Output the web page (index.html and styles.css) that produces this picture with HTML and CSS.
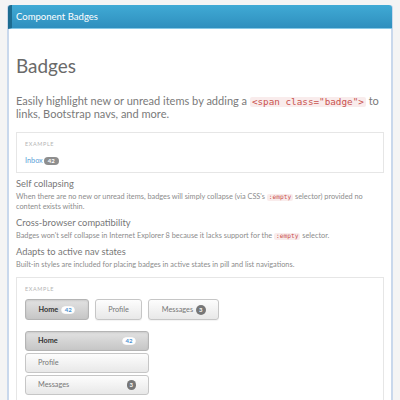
FILE: index.html
```html
<!DOCTYPE html>
<html>
<head>
<meta charset="utf-8">
<link rel="stylesheet" href="styles.css">
</head>
<body>
<div class="panel">
  <div class="panel-heading">Component Badges</div>
  <div class="panel-body">
    <h1 class="title">Badges</h1>
    <p class="lead">Easily highlight new or unread items by adding a <code>&lt;span class="badge"&gt;</code> to links, Bootstrap navs, and more.</p>
    <div class="example ex1">
      <div class="example-label">Example</div>
      <div class="inbox"><a class="link" href="#">Inbox</a><span class="badge">42</span></div>
    </div>
    <h4 class="sub">Self collapsing</h4>
    <p class="text">When there are no new or unread items, badges will simply collapse (via CSS's <code>:empty</code> selector) provided no content exists within.</p>
    <h4 class="sub">Cross-browser compatibility</h4>
    <p class="text">Badges won't self collapse in Internet Explorer 8 because it lacks support for the <code>:empty</code> selector.</p>
    <h4 class="sub">Adapts to active nav states</h4>
    <p class="text">Built-in styles are included for placing badges in active states in pill and list navigations.</p>
    <div class="example ex2">
      <div class="example-label">Example</div>
      <ul class="pills">
        <li class="pill active">Home <span class="badge light">42</span></li>
        <li class="pill">Profile</li>
        <li class="pill">Messages <span class="badge dark">3</span></li>
      </ul>
      <ul class="list">
        <li class="item active"><span>Home</span><span class="badge light">42</span></li>
        <li class="item"><span>Profile</span></li>
        <li class="item"><span>Messages</span><span class="badge dark">3</span></li>
      </ul>
    </div>
  </div>
</div>
</body>
</html>
```

FILE: styles.css
```css
html, body {
  margin: 0;
  padding: 0;
  background: #f4f4f4;
  font-family: Lato, "Noto Sans", sans-serif;
  height: 400px;
  overflow: hidden;
}
.panel {
  margin: 5px 7px 0;
  background: #fff;
  border-left: 2px solid #c9d8ec;
  border-right: 2px solid #c9d8ec;
  border-radius: 3px 3px 0 0;
  min-height: 400px;
}
.panel-heading {
  margin: 0 -1px;
  height: 23px;
  line-height: 23px;
  border-radius: 3px 3px 0 0;
  background: linear-gradient(#40aad5, #2f8fbe);
  border-bottom: 1px solid #86c8e6;
  border-left: 4px solid #1d6c90;
  color: #fff;
  font-size: 9.54px;
  padding-left: 4px;
}
.panel-body {
  padding: 0 7px;
}
.title {
  margin: 0;
  padding-top: 25px;
  font-size: 18.94px;
  font-weight: normal;
  color: #6a6a6a;
  line-height: 24px;
}
.lead {
  margin: 15.5px 0 0;
  font-size: 11.04px;
  line-height: 13.5px;
  color: #7a7a7a;
}
code {
  display: inline-block;
  line-height: 1.1;
  font-family: "DejaVu Sans Mono", "Liberation Mono", monospace;
  background: #f9ecec;
  color: #c9524f;
  border-radius: 2px;
  padding: 0 2px;
}
.lead code {
  font-size: 9.3px;
}
.text code {
  font-size: 6.2px;
}
.example {
  border: 1px solid #e6e6e6;
  padding: 7px 8px 6px;
}
.ex1 {
  margin: 11px 0 4px;
}
.example-label {
  font-size: 5.5px;
  letter-spacing: 0.6px;
  text-transform: uppercase;
  color: #b5b5b5;
  line-height: 8px;
}
.inbox {
  margin-top: 8px;
  font-size: 7.3px;
  line-height: 10px;
  display: flex;
  align-items: center;
}
.link {
  color: #5a9fd8;
  text-decoration: none;
  margin-right: 1px;
}
.badge {
  display: inline-block;
  font-size: 6px;
  font-weight: bold;
  line-height: 8px;
  padding: 0 4px;
  border-radius: 5px;
  background: #8e8e8e;
  color: #fff;
}
.badge.light {
  background: #fff;
  color: #4a8fd0;
  padding: 0 3.5px;
  box-shadow: inset 0 0 1px #aaa;
}
.badge.dark {
  background: #777;
  padding: 1px 3px;
  border-radius: 6px;
}
.sub {
  margin: 4.8px 0 0;
  font-size: 9.34px;
  font-weight: normal;
  color: #777;
  line-height: 13px;
}
.text {
  margin: 2px 0 0;
  font-size: 7.34px;
  line-height: 9.3px;
  color: #8c8c8c;
}
.ex2 {
  margin-top: 7.5px;
}
.pills {
  list-style: none;
  margin: 6.7px 0 0;
  padding: 0;
  display: flex;
  gap: 6px;
}
.pill {
  height: 19px;
  padding: 0 12.5px;
  display: flex;
  align-items: center;
  gap: 3px;
  font-size: 7.3px;
  color: #777;
  border: 1px solid #c6c6c6;
  border-radius: 3px;
  background: linear-gradient(#fdfdfd, #e8e8e8);
  box-shadow: 0 1px 1px rgba(0,0,0,0.05);
}
.pill.active, .item.active {
  color: #333;
  font-weight: bold;
  background: linear-gradient(#e2e2e2, #c6c6c6);
  border-color: #b4b4b4;
  box-shadow: inset 0 1px 2px rgba(0,0,0,0.1);
}
.list {
  list-style: none;
  margin: 10.3px 0 0;
  padding: 0;
  width: 124px;
  display: flex;
  flex-direction: column;
  gap: 2px;
}
.item {
  height: 18px;
  padding: 0 12px;
  display: flex;
  align-items: center;
  justify-content: space-between;
  font-size: 7.3px;
  color: #777;
  border: 1px solid #c6c6c6;
  border-radius: 3px;
  background: linear-gradient(#fdfdfd, #e8e8e8);
}
```
